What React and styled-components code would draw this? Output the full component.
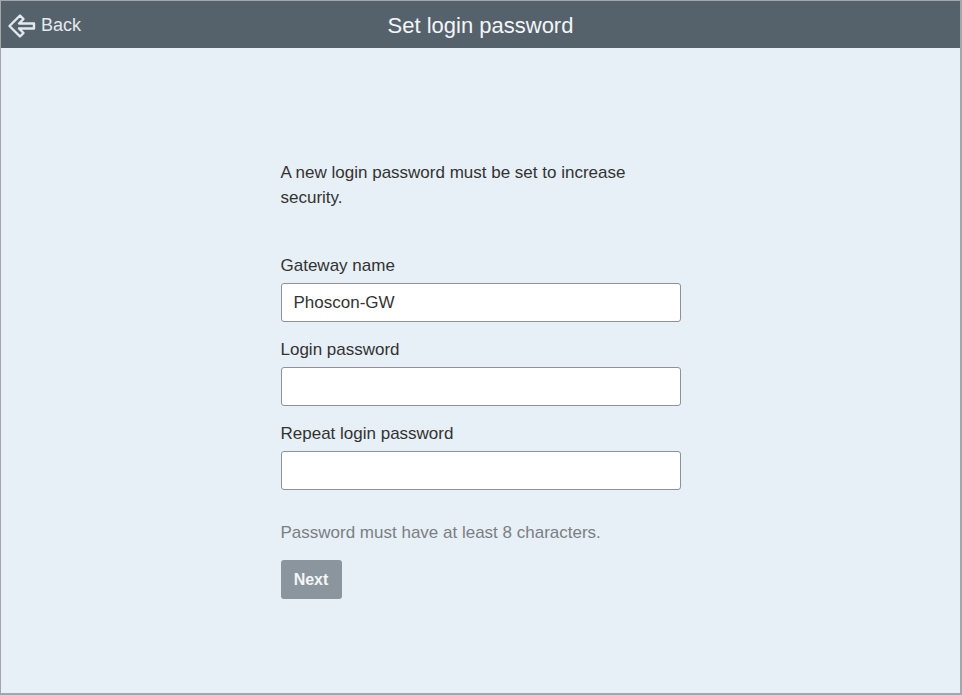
import React from "react";
import styled, { createGlobalStyle } from "styled-components";

const Global = createGlobalStyle`
  html, body { margin: 0; padding: 0; }
  body { font-family: "Liberation Sans", Arial, sans-serif; background: #e7eff7; }
  * { box-sizing: border-box; }
`;

const Frame = styled.div`
  height: 695px;
  border: 1px solid #a3a7ab;
  border-right-width: 2px;
  border-bottom-width: 2px;
  background: #e7eff7;
  display: flex;
  flex-direction: column;
`;

const Header = styled.header`
  height: 47px;
  background: #56626b;
  display: grid;
  grid-template-columns: 1fr auto 1fr;
  align-items: center;
  color: #f2f5f8;
`;

const BackButton = styled.button`
  justify-self: start;
  display: flex;
  align-items: center;
  gap: 4px;
  background: none;
  border: none;
  color: #e4e9ed;
  font-family: inherit;
  font-size: 18px;
  padding: 2px 0 0 6px;
  cursor: pointer;
`;

const Title = styled.h1`
  margin: 0;
  padding-top: 2px;
  font-size: 22px;
  font-weight: normal;
  color: #f3f6f9;
`;

const Main = styled.main`
  flex: 1;
  display: flex;
  justify-content: center;
  padding-top: 112px;
`;

const Column = styled.div`
  width: 400px;
  display: flex;
  flex-direction: column;
`;

const Intro = styled.p`
  margin: 0 0 46px;
  font-size: 17px;
  line-height: 25px;
  color: #333;
  padding-right: 40px;
`;

const Label = styled.label`
  display: block;
  font-size: 17px;
  line-height: 20px;
  color: #333;
  margin-bottom: 7px;
`;

const Field = styled.div`
  margin-bottom: 18px;
`;

const Input = styled.input`
  display: block;
  width: 400px;
  height: 39px;
  border: 1px solid #8e9296;
  border-radius: 3px;
  background: #fff;
  padding: 0 12px;
  font-family: inherit;
  font-size: 17px;
  color: #333;
  outline: none;
`;

const Hint = styled.p`
  margin: 15px 0 17px;
  font-size: 17px;
  line-height: 20px;
  color: #7b7f83;
`;

const NextButton = styled.button`
  align-self: flex-start;
  width: 61px;
  height: 39px;
  border: none;
  border-radius: 3px;
  background: #8b959e;
  color: #f4f6f8;
  font-family: inherit;
  font-size: 16px;
  font-weight: bold;
`;

const BackArrow = () => (
  <svg width="30" height="30" viewBox="0 0 30 30" fill="none" stroke="#e4e9ed" strokeWidth="2.4" strokeLinejoin="round">
    <path d="M2.5 15 L13 4.5 L16.5 8 L12 12.5 H27 V17.5 H12 L16.5 22 L13 25.5 Z" />
  </svg>
);

export default function App() {
  return (
    <>
      <Global />
      <Frame>
        <Header>
          <BackButton>
            <BackArrow />
            Back
          </BackButton>
          <Title>Set login password</Title>
          <div />
        </Header>
        <Main>
          <Column>
            <Intro>A new login password must be set to increase security.</Intro>
            <Field>
              <Label>Gateway name</Label>
              <Input defaultValue="Phoscon-GW" />
            </Field>
            <Field>
              <Label>Login password</Label>
              <Input type="password" />
            </Field>
            <Field>
              <Label>Repeat login password</Label>
              <Input type="password" />
            </Field>
            <Hint>Password must have at least 8 characters.</Hint>
            <NextButton>Next</NextButton>
          </Column>
        </Main>
      </Frame>
    </>
  );
}
